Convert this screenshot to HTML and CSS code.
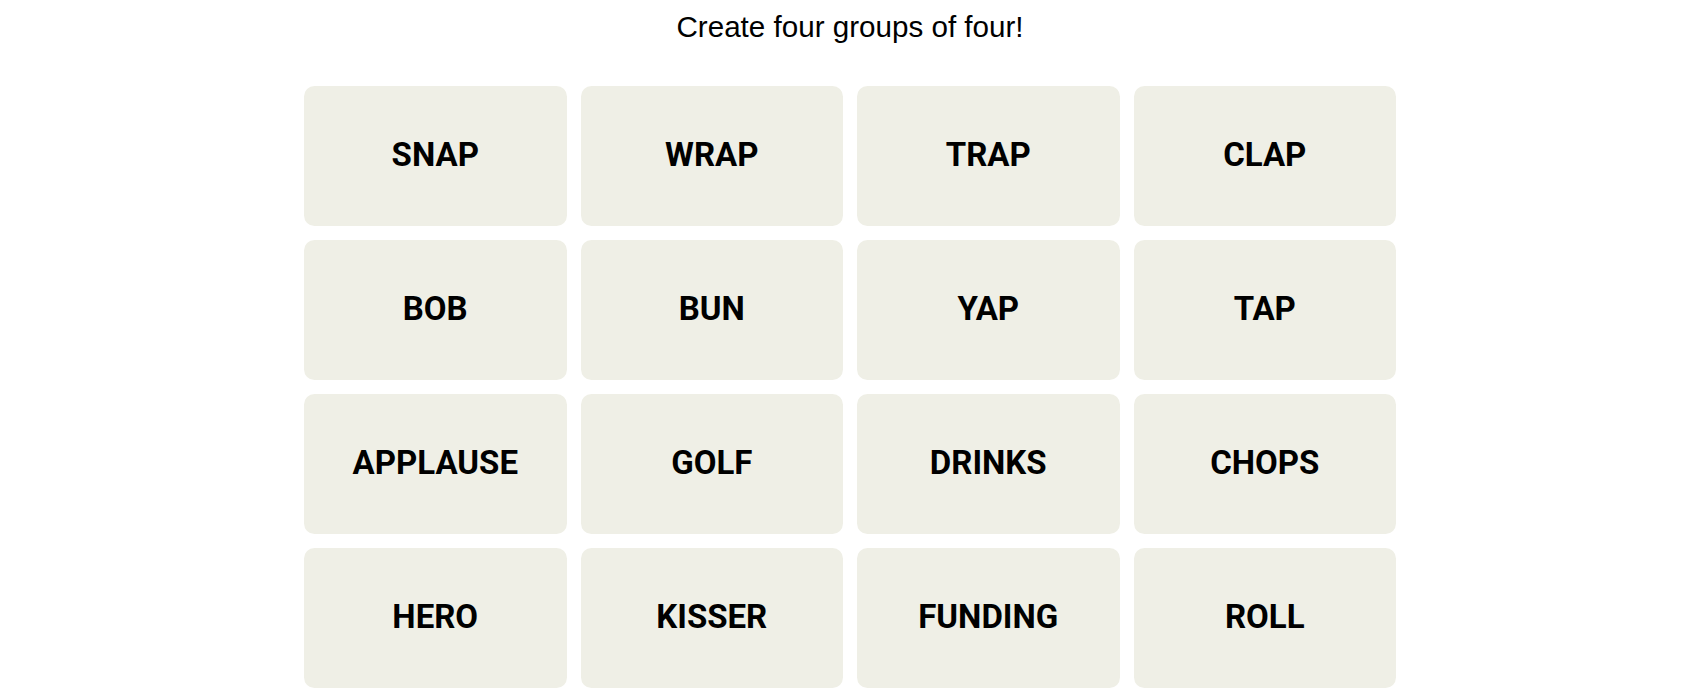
FILE: index.html
```html
<!DOCTYPE html>
<html lang="en">
<head>
<meta charset="utf-8">
<title>Connections</title>
<link rel="stylesheet" href="styles.css">
</head>
<body>
<main class="game">
  <p class="prompt">Create four groups of four!</p>
  <div class="board">
    <button class="tile">SNAP</button>
    <button class="tile">WRAP</button>
    <button class="tile">TRAP</button>
    <button class="tile">CLAP</button>
    <button class="tile">BOB</button>
    <button class="tile">BUN</button>
    <button class="tile">YAP</button>
    <button class="tile">TAP</button>
    <button class="tile">APPLAUSE</button>
    <button class="tile">GOLF</button>
    <button class="tile">DRINKS</button>
    <button class="tile">CHOPS</button>
    <button class="tile">HERO</button>
    <button class="tile">KISSER</button>
    <button class="tile">FUNDING</button>
    <button class="tile">ROLL</button>
  </div>
</main>
</body>
</html>
```
FILE: styles.css
```css
html, body {
  margin: 0;
  padding: 0;
  background: #ffffff;
}
.game {
  display: flex;
  flex-direction: column;
  align-items: center;
}
.prompt {
  margin: 0;
  padding-top: 9px;
  height: 86px;
  box-sizing: border-box;
  font-family: "Liberation Sans", Arial, sans-serif;
  font-size: 29.6px;
  line-height: 36px;
  color: #000;
}
.board {
  display: grid;
  grid-template-columns: repeat(4, 262.5px);
  grid-auto-rows: 140px;
  gap: 14px;
}
.tile {
  border: none;
  border-radius: 10.5px;
  background: #efefe6;
  color: #000;
  font-family: Roboto, "Liberation Sans", sans-serif;
  font-weight: 700;
  font-size: 33px;
  padding: 0 0 3px 0;
  margin: 0;
  display: flex;
  align-items: center;
  justify-content: center;
  cursor: pointer;
}
```
